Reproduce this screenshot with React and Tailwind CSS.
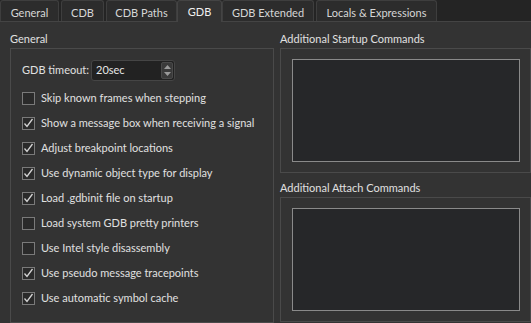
import React from "react";

const tabs = [
  { label: "General", w: "w-[59px] mr-[2px]" },
  { label: "CDB", w: "w-[43px] mr-[2px]" },
  { label: "CDB Paths", w: "w-[71px]" },
  { label: "GDB", w: "w-[45px]", active: true },
  { label: "GDB Extended", w: "w-[92px] mr-[2px]" },
  { label: "Locals & Expressions", w: "w-[121px]" },
];

const options = [
  { label: "Skip known frames when stepping", checked: false },
  { label: "Show a message box when receiving a signal", checked: true },
  { label: "Adjust breakpoint locations", checked: true },
  { label: "Use dynamic object type for display", checked: true },
  { label: "Load .gdbinit file on startup", checked: true },
  { label: "Load system GDB pretty printers", checked: false },
  { label: "Use Intel style disassembly", checked: false },
  { label: "Use pseudo message tracepoints", checked: true },
  { label: "Use automatic symbol cache", checked: true },
];

function CheckBox({ checked }) {
  return (
    <div className="w-[13px] h-[13px] border border-[#7a7a7a] bg-[#2a2a2a] flex items-center justify-center shrink-0">
      {checked && (
        <svg width="11" height="11" viewBox="0 0 11 11">
          <polyline
            points="1.5,5.5 4,8.5 9.5,1"
            fill="none"
            stroke="#d4d4d4"
            strokeWidth="1.3"
          />
        </svg>
      )}
    </div>
  );
}

function SpinBox() {
  return (
    <div className="w-[84px] h-[21px] shrink-0 rounded-[3px] border border-[#454545] bg-[#222222] flex items-center pl-[4px] pr-[1px]">
      <span className="flex-1 text-[#e6e6e6]">20sec</span>
      <div className="w-[12px] h-[17px] rounded-[2px] bg-[#3a3a3a] border border-[#4a4a4a] flex flex-col items-center justify-center gap-[3px]">
        <svg width="7" height="4" viewBox="0 0 7 4">
          <polygon points="0,4 3.5,0 7,4" fill="#9a9a9a" />
        </svg>
        <svg width="7" height="4" viewBox="0 0 7 4">
          <polygon points="0,0 3.5,4 7,0" fill="#9a9a9a" />
        </svg>
      </div>
    </div>
  );
}

function CommandBox({ title, mt }) {
  return (
    <div className={mt}>
      <div className="h-[16px] leading-[16px] mb-[1px]">{title}</div>
      <div className="border border-[#4a4a4a] pt-[10px] pb-[10px] pl-[11px] pr-[10px]">
        <div className="h-[103px] border border-[#8a8a8a] bg-[#262729]" />
      </div>
    </div>
  );
}

export default function App() {
  return (
    <div
      className="w-[531px] h-[323px] overflow-hidden bg-[#242424] text-[11px] text-[#e0e0e0] flex flex-col whitespace-nowrap"
      style={{ fontFamily: "Lato, sans-serif" }}
    >
      {/* TABS */}
      <div className="h-[21px] flex items-start shrink-0">
        {tabs.map((t) =>
          t.active ? (
            <div
              key={t.label}
              className={`${t.w} h-[22px] relative z-10 bg-[#333333] border-x border-t border-[#444444] rounded-t-[3px] flex justify-center pt-[3px] text-[#f0f0f0]`}
            >
              {t.label}
            </div>
          ) : (
            <div
              key={t.label}
              className={`${t.w} h-[21px] bg-[#2c2c2c] border-x border-t border-[#3e3e3e] rounded-t-[3px] flex justify-center pt-[4px] text-[#d6d6d6]`}
            >
              {t.label}
            </div>
          )
        )}
      </div>

      {/* PANE */}
      <div className="flex-1 bg-[#333333] border-t border-[#444444] flex pt-[9px] pl-[10px] gap-[6px]">
        {/* LEFT */}
        <div className="w-[264px] flex flex-col">
          <div className="h-[16px] leading-[16px] mb-[1px]">General</div>
          <div className="flex-1 border border-[#4a4a4a] pt-[11px] pl-[11px]">
            <div className="flex items-center h-[21px]">
              <span className="w-[69px] shrink-0">GDB timeout:</span>
              <SpinBox />
            </div>
            <div className="mt-[5px] flex flex-col">
              {options.map((o) => (
                <div key={o.label} className="h-[25px] flex items-center gap-[6px]">
                  <CheckBox checked={o.checked} />
                  <span>{o.label}</span>
                </div>
              ))}
            </div>
          </div>
        </div>

        {/* RIGHT */}
        <div className="w-[251px] flex flex-col">
          <CommandBox title="Additional Startup Commands" />
          <CommandBox title="Additional Attach Commands" mt="mt-[7px]" />
        </div>
      </div>
    </div>
  );
}
